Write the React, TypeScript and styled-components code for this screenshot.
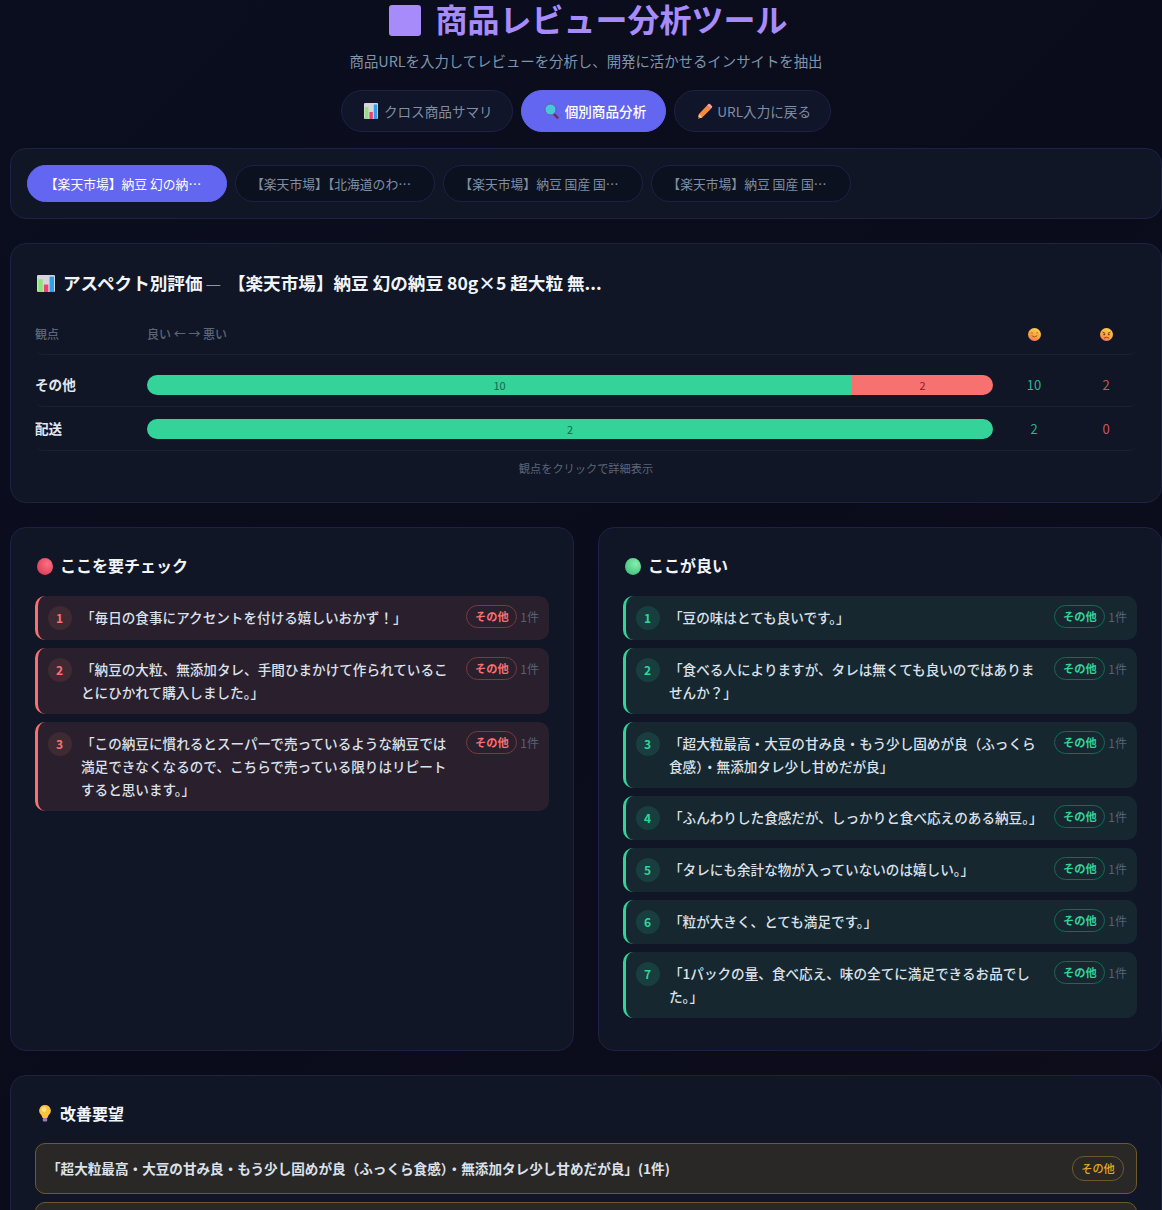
import React from 'react'
import styled, { createGlobalStyle, css } from 'styled-components'

type Tone = 'bad' | 'good' | 'warn'

const tones = {
  bad: { text: '#f87171', item: '#2a1f2d', line: '#f87171', circle: '#3f2a33', border: '#7a3a40' },
  good: { text: '#34d399', item: '#16272f', line: '#34d399', circle: '#183e3f', border: '#1f6655' },
  warn: { text: '#e5a823', item: '#2a2827', line: '#6d5a2b', circle: '#3a3226', border: '#6d5a2b' },
}

const GlobalStyle = createGlobalStyle`
  html, body {
    margin: 0;
    height: 1210px;
    overflow: hidden;
  }
  body {
    background: linear-gradient(135deg, #0a0e1f 0%, #0b0c1b 50%, #0d0d1c 100%);
    font-family: "Noto Sans CJK JP", "Noto Sans", sans-serif;
    color: #e2e8f0;
  }
  * { box-sizing: border-box; }
`

const Page = styled.div`
  padding-left: 10px;
`

const Header = styled.header`
  display: flex;
  flex-direction: column;
  align-items: center;
  margin-bottom: 16px;
`

const Title = styled.h1`
  display: flex;
  align-items: center;
  gap: 14px;
  margin: 0 0 0 5px;
  height: 36px;
  font-size: 32px;
  line-height: 36px;
  font-weight: 700;
  color: #a78bfa;
`

const TitleMark = styled.span`
  width: 32px;
  height: 31px;
  margin-top: 5px;
  border-radius: 3px;
  background: #a78bfa;
`

const Subtitle = styled.p`
  margin: 13px 0 18px;
  font-size: 14.4px;
  line-height: 23px;
  color: #7f95ad;
`

const NavRow = styled.nav`
  display: flex;
  gap: 8px;
`

const NavButton = styled.button<{ $active?: boolean }>`
  height: 42px;
  padding: 0 19px 0 22px;
  border-radius: 21px;
  font-family: inherit;
  font-size: 13.6px;
  display: flex;
  align-items: center;
  gap: 6px;
  border: 1px solid ${p => (p.$active ? '#6366f1' : '#1e2145')};
  background: ${p => (p.$active ? '#6366f1' : '#10152a')};
  color: ${p => (p.$active ? '#ffffff' : '#7f8ea3')};
  font-weight: ${p => (p.$active ? 500 : 400)};
`

const Card = styled.section`
  background: #101626;
  border: 1px solid #1e2145;
  border-radius: 16px;
  padding: 24px;
`

const TabPanel = styled(Card)`
  display: flex;
  gap: 8px;
  padding: 16px;
  margin-bottom: 24px;
`

const Tab = styled.button<{ $active?: boolean }>`
  width: 200px;
  height: 37px;
  padding: 0 8px 0 0;
  border-radius: 19px;
  font-family: inherit;
  font-size: 12.8px;
  white-space: nowrap;
  border: 1px solid ${p => (p.$active ? '#6366f1' : '#1e2145')};
  background: ${p => (p.$active ? '#6366f1' : '#0c1120')};
  color: ${p => (p.$active ? '#ffffff' : '#7f8ea3')};
`

const AspectCard = styled(Card)`
  margin-bottom: 24px;
  padding-bottom: 25px;
`

const CardTitle = styled.h2`
  display: flex;
  align-items: center;
  gap: 8px;
  margin: -1px 0 0 2px;
  font-size: 17.6px;
  line-height: 32px;
  font-weight: 700;
  color: #f1f5f9;
`

const TitleText = styled.span`
  white-space: pre;
`

const TitleDash = styled.span`
  margin: 0 3px 0 -1px;
  font-weight: 300;
  color: #aab4c4;
`

const AspectGrid = styled.div<{ $head?: boolean }>`
  display: grid;
  grid-template-columns: 100px 1fr 60px 60px;
  column-gap: 12px;
  align-items: center;
  border-bottom: 1px solid #1b2033;
  border-radius: 8px;
  ${p =>
    p.$head
      ? css`
          height: 34px;
          margin: 22px 0 8px;
          padding-bottom: 8px;
          font-size: 12px;
          font-weight: 500;
          color: #5b6578;
        `
      : css`
          height: 44px;
        `}
`

const AspectLabel = styled.div`
  padding-bottom: 2px;
  font-size: 13.6px;
  font-weight: 700;
  color: #e2e8f0;
`

const Centered = styled.div`
  display: flex;
  justify-content: center;
  padding-right: 2px;
`

const FaceCell = styled(Centered)`
  margin-top: 2px;
`

const Count = styled(Centered)<{ $tone: Tone }>`
  font-size: 13px;
  color: ${p => (p.$tone === 'good' ? '#2bb58a' : '#c9565e')};
`

const Bar = styled.div`
  display: flex;
  height: 20px;
  border-radius: 10px;
  overflow: hidden;
`

const BarPart = styled.div<{ $tone: Tone }>`
  display: flex;
  align-items: center;
  justify-content: center;
  font-size: 11px;
  background: ${p => (p.$tone === 'good' ? '#34d399' : '#f87171')};
  color: ${p => (p.$tone === 'good' ? '#0f6b50' : '#8a2020')};
`

const Hint = styled.div`
  margin-top: 8px;
  text-align: center;
  font-size: 11.2px;
  line-height: 18px;
  color: #5b6578;
`

const Columns = styled.div`
  display: grid;
  grid-template-columns: 1fr 1fr;
  gap: 24px;
  margin-bottom: 24px;
`

const PanelTitle = styled.h3`
  display: flex;
  align-items: center;
  gap: 7px;
  margin: -2px 0 16px 2px;
  height: 30px;
  font-size: 16px;
  font-weight: 700;
  color: #f1f5f9;
`

const List = styled.div`
  display: flex;
  flex-direction: column;
  gap: 8px;
  padding-bottom: 8px;
`

const Item = styled.div<{ $tone: Tone }>`
  display: flex;
  gap: 9px;
  padding: 10px;
  border-left: 3px solid ${p => tones[p.$tone].line};
  border-radius: 10px;
  background: ${p => tones[p.$tone].item};
`

const Rank = styled.span<{ $tone: Tone }>`
  flex: none;
  width: 24px;
  height: 24px;
  padding: 0 1px 2px 0;
  border-radius: 50%;
  display: flex;
  align-items: center;
  justify-content: center;
  font-size: 12px;
  font-weight: 700;
  background: ${p => tones[p.$tone].circle};
  color: ${p => tones[p.$tone].text};
`

const ItemText = styled.div`
  flex: 1;
  font-size: 13.6px;
  line-height: 23px;
  font-weight: 500;
  color: #dbe1ea;
`

const ItemMeta = styled.div`
  flex: none;
  display: flex;
  align-items: center;
  gap: 3px;
  height: 23px;
  margin: -1px 0 0 3px;
`

const Tag = styled.span<{ $tone: Tone }>`
  display: inline-block;
  padding: 0 7.7px;
  height: 23px;
  line-height: 21px;
  border-radius: 12px;
  font-size: 11.2px;
  font-weight: 700;
  border: 1px solid ${p => tones[p.$tone].border};
  color: ${p => tones[p.$tone].text};
  background: ${p => tones[p.$tone].item};
`

const Mentions = styled.span`
  font-size: 12px;
  color: #566175;
`

const RequestTitle = styled(PanelTitle)`
  gap: 8px;
  margin: -2px 0 15px 3px;
`

const RequestItem = styled.div`
  display: flex;
  align-items: center;
  justify-content: space-between;
  height: 51px;
  padding: 0 12px 0 11px;
  margin-bottom: 8px;
  border: 1px solid #6d5a2b;
  border-radius: 10px;
  background: #2a2827;
  font-size: 13.6px;
  font-weight: 600;
  color: #dbe1ea;
`

const RequestText = styled.span`
  padding-bottom: 2px;
`

const RequestTag = styled(Tag)`
  height: 25px;
  line-height: 23px;
  padding: 0 8.2px;
  font-weight: 500;
`

const Ball = styled.span<{ $tone: Tone }>`
  width: 16px;
  height: 17px;
  margin-top: 2px;
  border-radius: 50%;
  background: ${p =>
    p.$tone === 'good'
      ? 'radial-gradient(circle at 65% 35%, #86efac, #2fb573)'
      : 'radial-gradient(circle at 65% 35%, #fb7185, #d92f4b)'};
`

const ChartIcon = ({ w = 14, h = 16 }: { w?: number; h?: number }) => (
  <svg width={w} height={h} viewBox="0 0 14 16" preserveAspectRatio="none">
    <rect width="14" height="16" rx="1" fill="#d8d4de" />
    <rect x="1" y="4" width="3.4" height="12" fill="#86e86e" />
    <rect x="5.4" y="9" width="3.4" height="7" fill="#ee3f7c" />
    <rect x="9.8" y="1.5" width="3.4" height="14.5" fill="#2f9fe8" />
  </svg>
)

const SearchIcon = () => (
  <svg width="15" height="16" viewBox="0 0 15 16">
    <path d="M9.6 10.6l3.8 4" stroke="#6e2f58" strokeWidth="2.6" strokeLinecap="round" />
    <circle cx="6.5" cy="6.5" r="5.5" fill="#48c6dc" stroke="#6a5aa8" strokeWidth="1" />
  </svg>
)

const PencilIcon = () => (
  <svg width="14" height="16" viewBox="0 0 14 16" overflow="visible">
    <path d="M10 2.4l3.8 3.6L5.2 14.4 1 15.4l1-4.4z" fill="#f98a3a" />
    <path d="M2 11l-1 4.4 4.2-1z" fill="#f5c89a" />
    <path d="M1.4 13.6L1 15.4l1.8-.4z" fill="#444" />
    <path d="M10 2.4l1.3-1.3a1.2 1.2 0 0 1 1.7 0l1.9 1.8a1.2 1.2 0 0 1 0 1.7L13.8 6z" fill="#f7a0ac" />
  </svg>
)

const faceFill = (
  <defs>
    <linearGradient id="face" x1="0.7" y1="0" x2="0.3" y2="1">
      <stop offset="0" stopColor="#fdd34f" />
      <stop offset="0.7" stopColor="#fb9a3c" />
      <stop offset="1" stopColor="#f0707a" />
    </linearGradient>
  </defs>
)

const SmileIcon = () => (
  <svg width="13" height="13" viewBox="0 0 13 13">
    {faceFill}
    <circle cx="6.5" cy="6.5" r="6.5" fill="url(#face)" />
    <path d="M2.8 5.2q1-1.1 2 0M8.2 5.2q1-1.1 2 0" stroke="#9a5424" strokeWidth="0.8" fill="none" />
    <path d="M3.6 7.6q2.9 2.8 5.8 0" stroke="#9a5424" strokeWidth="0.9" fill="none" />
  </svg>
)

const AngryIcon = () => (
  <svg width="13" height="13" viewBox="0 0 13 13">
    <circle cx="6.5" cy="6.5" r="6.5" fill="url(#face)" />
    <path d="M2.4 4l2.8 1.4M10.6 4L7.8 5.4" stroke="#7a3a20" strokeWidth="0.9" />
    <circle cx="4.2" cy="6.4" r="0.9" fill="#7a3a20" />
    <circle cx="8.8" cy="6.4" r="0.9" fill="#7a3a20" />
    <path d="M4 10.2q2.5-2 5 0" stroke="#7a3a20" strokeWidth="0.9" fill="none" />
  </svg>
)

const BulbIcon = () => (
  <svg width="14" height="17" viewBox="0 0 14 17">
    <path d="M7 0a5.8 5.8 0 0 1 3.4 10.5L9.4 13H4.6l-1-2.5A5.8 5.8 0 0 1 7 0z" fill="#fcc23d" />
    <circle cx="6" cy="4.5" r="2.4" fill="#fde58a" />
    <rect x="4.8" y="13" width="4.4" height="3.4" rx="1" fill="#9a7fa8" />
  </svg>
)

const bad = [
  '「毎日の食事にアクセントを付ける嬉しいおかず！」',
  '「納豆の大粒、無添加タレ、手間ひまかけて作られていることにひかれて購入しました。」',
  '「この納豆に慣れるとスーパーで売っているような納豆では満足できなくなるので、こちらで売っている限りはリピートすると思います。」',
]

const good = [
  '「豆の味はとても良いです。」',
  '「食べる人によりますが、タレは無くても良いのではありませんか？」',
  '「超大粒最高・大豆の甘み良・もう少し固めが良（ふっくら食感）・無添加タレ少し甘めだが良」',
  '「ふんわりした食感だが、しっかりと食べ応えのある納豆。」',
  '「タレにも余計な物が入っていないのは嬉しい。」',
  '「粒が大きく、とても満足です。」',
  '「1パックの量、食べ応え、味の全てに満足できるお品でした。」',
]

const tabs = [
  '【楽天市場】納豆 幻の納…',
  '【楽天市場】【北海道のわ…',
  '【楽天市場】納豆 国産 国…',
  '【楽天市場】納豆 国産 国…',
]

const ReviewPanel = ({ tone, title, items }: { tone: Tone; title: string; items: string[] }) => (
  <Card>
    <PanelTitle>
      <Ball $tone={tone} />
      {title}
    </PanelTitle>
    <List>
      {items.map((text, i) => (
        <Item key={text} $tone={tone}>
          <Rank $tone={tone}>{i + 1}</Rank>
          <ItemText>{text}</ItemText>
          <ItemMeta>
            <Tag $tone={tone}>その他</Tag>
            <Mentions>1件</Mentions>
          </ItemMeta>
        </Item>
      ))}
    </List>
  </Card>
)

const App = () => (
  <Page>
    <GlobalStyle />
    <Header>
      <Title>
        <TitleMark />
        商品レビュー分析ツール
      </Title>
      <Subtitle>商品URLを入力してレビューを分析し、開発に活かせるインサイトを抽出</Subtitle>
      <NavRow>
        <NavButton>
          <ChartIcon />
          クロス商品サマリ
        </NavButton>
        <NavButton $active>
          <SearchIcon />
          個別商品分析
        </NavButton>
        <NavButton>
          <PencilIcon />
          URL入力に戻る
        </NavButton>
      </NavRow>
    </Header>

    <TabPanel>
      {tabs.map((tab, i) => (
        <Tab key={i} $active={i === 0}>
          {tab}
        </Tab>
      ))}
    </TabPanel>

    <AspectCard>
      <CardTitle>
        <ChartIcon w={18} h={17} />
        <TitleText>
          アスペクト別評価
          <TitleDash> — </TitleDash>
          【楽天市場】納豆 幻の納豆 80g×5 超大粒 無...
        </TitleText>
      </CardTitle>
      <AspectGrid $head>
        <div>観点</div>
        <div>良い ← → 悪い</div>
        <FaceCell>
          <SmileIcon />
        </FaceCell>
        <FaceCell>
          <AngryIcon />
        </FaceCell>
      </AspectGrid>
      <AspectGrid>
        <AspectLabel>その他</AspectLabel>
        <Bar>
          <BarPart $tone="good" style={{ width: `${(10 / 12) * 100}%` }}>
            10
          </BarPart>
          <BarPart $tone="bad" style={{ width: `${(2 / 12) * 100}%` }}>
            2
          </BarPart>
        </Bar>
        <Count $tone="good">10</Count>
        <Count $tone="bad">2</Count>
      </AspectGrid>
      <AspectGrid>
        <AspectLabel>配送</AspectLabel>
        <Bar>
          <BarPart $tone="good" style={{ width: '100%' }}>
            2
          </BarPart>
        </Bar>
        <Count $tone="good">2</Count>
        <Count $tone="bad">0</Count>
      </AspectGrid>
      <Hint>観点をクリックで詳細表示</Hint>
    </AspectCard>

    <Columns>
      <ReviewPanel tone="bad" title="ここを要チェック" items={bad} />
      <ReviewPanel tone="good" title="ここが良い" items={good} />
    </Columns>

    <Card>
      <RequestTitle>
        <BulbIcon />
        改善要望
      </RequestTitle>
      <RequestItem>
        <RequestText>
          「超大粒最高・大豆の甘み良・もう少し固めが良（ふっくら食感）・無添加タレ少し甘めだが良」(1件)
        </RequestText>
        <RequestTag $tone="warn">その他</RequestTag>
      </RequestItem>
      <RequestItem />
    </Card>
  </Page>
)

export default App
